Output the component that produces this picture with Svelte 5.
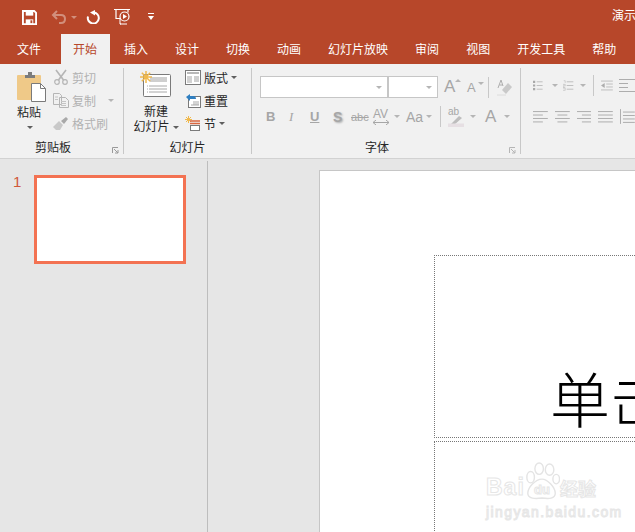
<script>
  const tabs = ["文件", "开始", "插入", "设计", "切换", "动画", "幻灯片放映", "审阅", "视图", "开发工具", "帮助"];
  const active = "开始";
</script>

<div class="app">
  <header class="titlebar">
    <svg class="qat save" width="15" height="15" viewBox="0 0 16 16">
      <path d="M1 1h12l2 2v12H1z" fill="none" stroke="#fff" stroke-width="2" />
      <rect x="4" y="2" width="8" height="4" fill="#fff" />
      <rect x="4" y="10" width="8" height="5" fill="#fff" />
      <rect x="9" y="11" width="2" height="3" fill="#b7472a" />
    </svg>
    <svg class="qat undo" width="16" height="14" viewBox="0 0 16 14">
      <path d="M6 1 2 5l4 4M2 5h8c3 0 4 2 4 4s-1 4-4 4H8" fill="none" stroke="#d28f7c" stroke-width="2" />
    </svg>
    <i class="caret qat-caret faded"></i>
    <svg class="qat redo" width="14" height="14" viewBox="0 0 14 14">
      <path d="M7.500 2.500A5.500 5.500 0 1 1 2 6.500" fill="none" stroke="#fff" stroke-width="2" />
      <path d="M4 2.500 9 0v5.500z" fill="#fff" />
    </svg>
    <svg class="qat show" width="17" height="18" viewBox="0 0 17 18">
      <path d="M0 1.500h16M2 1.500v9h4M14 1.500v3" fill="none" stroke="#fff" stroke-width="1.200" />
      <circle cx="10.500" cy="8.500" r="4.500" fill="none" stroke="#fff" stroke-width="1.200" />
      <path d="M9 6v5l4-2.500z" fill="#fff" />
      <path d="M6 10v6h1M6 16h7" fill="none" stroke="#fff" />
    </svg>
    <svg class="qat more" width="6" height="8" viewBox="0 0 6 8">
      <path d="M0 0h6v1H0zM0 3h6L3 7z" fill="#fff" />
    </svg>
    <span class="doc-title">演示文稿1 - PowerPoint</span>
  </header>

  <nav class="tabs">
    {#each tabs as t}
      <span class="tab" class:active={t === active}>{t}</span>
    {/each}
  </nav>

  <div class="ribbon">
    <section class="group g-clip">
      <div class="group-body">
        <div class="paste">
          <svg width="30" height="31" viewBox="0 0 30 31">
            <rect x="0" y="3" width="24" height="25" rx="1" fill="#efc988" />
            <path d="M8 6V3h3V0h4v3h3v3z" fill="#7c7c7c" />
            <path d="M14.500 11.500h9l5 5v13h-14z" fill="#fff" stroke="#7a7a7a" />
            <path d="M23.500 11.500v5h5" fill="none" stroke="#7a7a7a" />
          </svg>
          <span class="paste-label">粘贴</span>
          <i class="caret"></i>
        </div>
        <div class="small-col">
          <div class="small-row off">
            <svg width="16" height="16" viewBox="0 0 16 16">
              <path d="M3 1l7.500 10M13 1 5.500 11" stroke="#b5b5b5" stroke-width="1.600" fill="none" />
              <circle cx="4" cy="13" r="2.300" fill="none" stroke="#b5b5b5" stroke-width="1.200" />
              <circle cx="12" cy="13" r="2.300" fill="none" stroke="#b5b5b5" stroke-width="1.200" />
            </svg>
            <span>剪切</span>
          </div>
          <div class="small-row off">
            <svg width="16" height="16" viewBox="0 0 16 16">
              <path d="M.5 1.500h6l2 2v9h-8z M6.500 5.500h6l3 3v7h-9z" fill="#f1f1f1" stroke="#b5b5b5" />
              <path d="M2 5h3M2 7.500h3M8 9.500h5M8 11.500h5M8 13.500h5" stroke="#c4c4c4" />
            </svg>
            <span>复制</span>
            <i class="caret copy-caret faded-grey"></i>
          </div>
          <div class="small-row off">
            <svg width="16" height="16" viewBox="0 0 16 16">
              <path d="M0 12l6-6 4 4-3 5H3z" fill="#c9c9c9" />
              <path d="M8 6l5-4 2 2-4 5z" fill="#a9a9a9" />
            </svg>
            <span>格式刷</span>
          </div>
        </div>
      </div>
      <div class="group-label">剪贴板</div>
      <svg class="launcher" width="7" height="7" viewBox="0 0 7 7">
        <path d="M.5 6V.5H6M2 2l4 4M6 3v3H3" fill="none" stroke="#9a9a9a" />
      </svg>
    </section>

    <section class="group g-slides">
      <div class="group-body">
        <div class="new-slide">
          <svg width="31" height="27" viewBox="0 0 31 27">
            <rect x="3.500" y="3.500" width="27" height="22" rx="1" fill="#fff" stroke="#7a7a7a" />
            <rect x="10" y="6" width="17" height="5" fill="#cfcfcf" />
            <path d="M7 15h20M7 18h20M7 21h20" stroke="#a8a8a8" stroke-dasharray="1 1 18" />
            <path d="M6 0v12M0 6h12M1.800 1.800l8.400 8.400M10.200 1.800l-8.400 8.400" stroke="#f0b94d" stroke-width="1.500" />
          </svg>
          <span class="new-label">新建</span>
          <span class="new-label">幻灯片<i class="caret inline"></i></span>
        </div>
        <div class="small-col">
          <div class="small-row">
            <svg width="16" height="15" viewBox="0 0 16 15">
              <rect x=".5" y=".5" width="15" height="14" fill="#fff" stroke="#7a7a7a" />
              <rect x="2" y="2" width="12" height="2" fill="#b8b8b8" />
              <rect x="2" y="6" width="5" height="7" fill="#d2d2d2" />
              <path d="M9 7h5M9 9h5M9 11h5" stroke="#a0a0a0" />
            </svg>
            <span>版式</span>
            <i class="caret"></i>
          </div>
          <div class="small-row">
            <svg width="16" height="15" viewBox="0 0 16 15">
              <rect x="3.500" y="3.500" width="12" height="11" fill="#fff" stroke="#7a7a7a" />
              <path d="M8 9h6M8 11h6M6 12h8" stroke="#a8a8a8" />
              <path d="M1 4l4-3v2h3c2 0 3 1 3 3H5v2z" fill="#2f7fc1" />
            </svg>
            <span>重置</span>
          </div>
          <div class="small-row">
            <svg width="16" height="15" viewBox="0 0 16 15">
              <path d="M3.500 0v7M0 3.500h7M1 1l5 5M6 1 1 6" stroke="#f0b94d" />
              <path d="M5 5h10M5 7.500h10" stroke="#d9663f" stroke-width="1.300" />
              <rect x="5.500" y="9.500" width="9" height="5" fill="#fff" stroke="#7a7a7a" />
            </svg>
            <span>节</span>
            <i class="caret"></i>
          </div>
        </div>
      </div>
      <div class="group-label">幻灯片</div>
    </section>

    <section class="group g-font">
      <div class="group-body col">
        <div class="font-row">
          <div class="combo name"><i class="caret faded-grey"></i></div>
          <div class="combo size"><i class="caret faded-grey"></i></div>
          <span class="glyph big-a">A<i class="up"></i></span>
          <span class="glyph small-a">A<i class="down"></i></span>
          <span class="vsep"></span>
          <svg class="eraser" width="15" height="17" viewBox="0 0 15 17">
            <path d="M5 11l6-7 4 4-6 7z" fill="#c9c9c9" />
            <path d="M0 16h9" stroke="#dcdcdc" />
            <path d="M1 9l3-8 2 6M2.500 6h3" fill="none" stroke="#adadad" />
          </svg>
        </div>
        <div class="fmt-row">
          <b class="fmt f-b">B</b>
          <i class="fmt f-i">I</i>
          <u class="fmt f-u">U</u>
          <span class="fmt f-s">S</span>
          <s class="fmt f-abc">abc</s>
          <span class="fmt f-av">AV<svg width="16" height="5" viewBox="0 0 16 5"><path d="M0 2.500h16M3 0 0 2.500 3 5M13 0l3 2.500L13 5" fill="none" stroke="#a6a6a6" /></svg></span>
          <i class="caret faded-grey"></i>
          <span class="fmt f-aa">Aa</span>
          <i class="caret faded-grey"></i>
          <span class="vsep tall"></span>
          <span class="fmt f-hl">ab<svg width="16" height="12" viewBox="0 0 16 12"><path d="M3 9l8-8 3 2-8 7z" fill="#bdbdbd" /><rect y="8.500" width="16" height="3.500" fill="#e6dfe3" /></svg></span>
          <i class="caret faded-grey"></i>
          <span class="fmt f-color">A</span>
          <i class="caret faded-grey"></i>
        </div>
      </div>
      <div class="group-label">字体</div>
      <svg class="launcher" width="7" height="7" viewBox="0 0 7 7">
        <path d="M.5 6V.5H6M2 2l4 4M6 3v3H3" fill="none" stroke="#b5b5b5" />
      </svg>
    </section>

    <section class="group g-para">
      <div class="group-body col">
        <div class="para-row">
          <svg width="15" height="15" viewBox="0 0 15 15">
            <path d="M5 2.500h8M5 7.500h8M5 12.500h8" stroke="#adadad" />
            <path d="M0 2.500h3M0 7.500h3M0 12.500h3" stroke="#a8a8a8" stroke-width="3" />
          </svg>
          <i class="caret faded-grey c-bullet"></i>
          <svg class="num-list" width="15" height="15" viewBox="0 0 15 15">
            <path d="M5 2.500h9M5 7.500h9M5 12.500h9" stroke="#adadad" />
            <path d="M1 1h2v3M0 6h3v2H0v2h3M0 11h3v3H0" fill="none" stroke="#b8b8b8" stroke-width=".8" />
          </svg>
          <i class="caret faded-grey c-num"></i>
          <span class="vsep"></span>
          <svg width="16" height="13" viewBox="0 0 16 13">
            <path d="M0 .5h16M7 4.500h9M7 8.500h9M0 12.500h16" stroke="#adadad" />
            <path d="M5 3v7L0 6.500z" fill="#adadad" />
          </svg>
          <svg class="indent-more" width="16" height="13" viewBox="0 0 16 13">
            <path d="M0 .5h16M0 4.500h9M0 8.500h9M0 12.500h16" stroke="#adadad" />
          </svg>
        </div>
        <div class="para-row align">
          <svg width="15" height="12" viewBox="0 0 15 12"><path d="M0 .5h15M0 4h10M0 7.500h15M0 11h10" stroke="#adadad" /></svg>
          <svg width="15" height="12" viewBox="0 0 15 12"><path d="M0 .5h15M2.500 4h10M0 7.500h15M2.500 11h10" stroke="#adadad" /></svg>
          <svg width="15" height="12" viewBox="0 0 15 12"><path d="M0 .5h15M5 4h10M0 7.500h15M5 11h10" stroke="#adadad" /></svg>
          <svg width="15" height="12" viewBox="0 0 15 12"><path d="M0 .5h15M0 4h15M0 7.500h15M0 11h15" stroke="#adadad" /></svg>
          <svg width="15" height="15" viewBox="0 0 15 15"><path d="M.5 0v15M3 3h12M3 6.500h12M3 10h12M3 13.500h12" stroke="#adadad" /></svg>
        </div>
      </div>
    </section>
  </div>

  <main class="workspace">
    <aside class="thumbs">
      <span class="thumb-num">1</span>
      <div class="thumb"></div>
    </aside>
    <div class="editor">
      <div class="slide">
        <div class="placeholder title-box"><span class="title-text">单击此处添加标题</span></div>
        <div class="placeholder sub-box"></div>
      </div>
    </div>
  </main>

  <div class="watermark">
    <div class="wm-top">
      <span class="wm-bai">Bai</span>
      <svg class="wm-paw" width="36" height="38" viewBox="0 0 38 40">
        <g fill="#fff" stroke="#e4e4e4" stroke-width="1.500">
          <ellipse cx="7" cy="16" rx="4" ry="6" />
          <ellipse cx="16" cy="7" rx="4.500" ry="6" />
          <ellipse cx="27" cy="8" rx="4.500" ry="6" />
          <ellipse cx="34" cy="18" rx="3.500" ry="5" />
          <path d="M19 18c6 0 14 9 14 15 0 6-7 6-14 5-7 1-15 1-15-5 0-6 8-15 15-15z" />
        </g>
      </svg>
      <span class="wm-du">du</span>
      <span class="wm-jy">经验</span>
    </div>
    <div class="wm-url">jingyan.baidu.com</div>
  </div>
</div>

<style>
  :global(body) {
    margin: 0;
    overflow: hidden;
  }

  .app {
    position: relative;
    width: 635px;
    height: 532px;
    overflow: hidden;
    display: flex;
    flex-direction: column;
    background: #e6e6e6;
    font-family: "Noto Sans CJK SC", "Liberation Sans", sans-serif;
    font-size: 12px;
    color: #262626;
  }

  .titlebar {
    height: 34px;
    flex: none;
    background: #b7472a;
    display: flex;
    align-items: center;
    position: relative;
  }
  .qat { flex: none; }
  .save { margin-left: 22px; }
  .undo { margin-left: 14px; }
  .qat-caret { margin-left: 4px; }
  .redo { margin-left: 9px; }
  .show { margin-left: 14px; }
  .more { margin-left: 17px; }
  .doc-title {
    margin-left: 458px;
    color: #fff;
    white-space: nowrap;
    line-height: 30px;
    align-self: flex-start;
  }

  .tabs {
    height: 30px;
    flex: none;
    background: #b7472a;
    display: flex;
    padding-left: 17px;
    white-space: nowrap;
  }
  .tab {
    color: #fff;
    line-height: 30px;
    margin-right: 27px;
  }
  .tab:first-child { margin-right: 32px; }
  .tab.active {
    background: #f1f1f1;
    color: #b7472a;
    padding: 0 13px 0 12px;
    margin-left: -12px;
    margin-right: 14px;
  }

  .ribbon {
    height: 95px;
    flex: none;
    box-sizing: border-box;
    background: #f1f1f1;
    border-bottom: 1px solid #d2d2d2;
    display: flex;
    padding-top: 4px;
  }
  .group {
    position: relative;
    height: 86px;
    flex: none;
    box-sizing: border-box;
    border-right: 1px solid #c8c8c8;
    display: flex;
    flex-direction: column;
  }
  .group-body {
    height: 72px;
    flex: none;
    display: flex;
  }
  .group-body.col { flex-direction: column; }
  .group-label {
    line-height: 14px;
    text-align: center;
    white-space: nowrap;
  }
  .launcher {
    position: absolute;
    right: 4px;
    bottom: 0;
  }

  .g-clip { width: 124px; }
  .g-clip .group-label { padding-right: 17px; }
  .g-slides { width: 128px; }
  .g-font { width: 269px; }
  .g-font .group-label { padding-right: 18px; }
  .g-para { width: 114px; border-right: 0; }

  .caret {
    display: inline-block;
    flex: none;
    width: 0;
    height: 0;
    border: 3px solid transparent;
    border-top: 3px solid #5f5f5f;
    border-bottom: 0;
    vertical-align: middle;
  }
  .caret.inline { margin-left: 3px; }
  .caret.faded { border-top-color: #d28f7c; }
  .caret.faded-grey { border-top-color: #b5b5b5; }

  .paste {
    width: 53px;
    box-sizing: border-box;
    padding: 4px 0 0 17px;
    display: flex;
    flex-direction: column;
  }
  .paste-label {
    line-height: 16px;
    margin-top: 1px;
    white-space: nowrap;
  }
  .paste .caret { margin: 6px 0 0 10px; }

  .small-col {
    display: flex;
    flex-direction: column;
    padding-top: 1px;
    gap: 7px;
  }
  .small-row {
    height: 16px;
    display: flex;
    align-items: center;
    gap: 3px;
    white-space: nowrap;
  }
  .small-row.off { color: #b1b1b1; }
  .copy-caret { margin-left: 9px; }

  .new-slide {
    width: 61px;
    box-sizing: border-box;
    padding-top: 3px;
    display: flex;
    flex-direction: column;
    align-items: center;
  }
  .new-slide svg { margin-bottom: 5px; margin-left: 2px; }
  .new-label {
    line-height: 15px;
    white-space: nowrap;
    margin-left: 3px;
  }

  .font-row {
    display: flex;
    align-items: center;
    padding: 8px 0 0 8px;
    height: 22px;
  }
  .combo {
    height: 22px;
    box-sizing: border-box;
    background: #fff;
    border: 1px solid #c6c6c6;
    display: flex;
    align-items: center;
    justify-content: flex-end;
    padding-right: 5px;
  }
  .combo.name { width: 128px; }
  .combo.size { width: 50px; }
  .glyph {
    position: relative;
    color: #a6a6a6;
    font-family: "Liberation Sans", sans-serif;
  }
  .big-a { font-size: 17px; margin-left: 6px; width: 21px; }
  .small-a { font-size: 13px; margin-left: 2px; width: 18px; }
  .up, .down {
    position: absolute;
    left: 11px;
    top: 2px;
    border: 3px solid transparent;
    border-top: 0;
    border-bottom: 3px solid #b5b5b5;
  }
  .down {
    border-bottom: 0;
    border-top: 3px solid #b5b5b5;
  }
  .vsep {
    width: 1px;
    height: 21px;
    background: #c8c8c8;
    margin: 0 9px 0 3px;
    flex: none;
  }
  .font-row .vsep { margin-right: 8px; }

  .fmt-row {
    display: flex;
    align-items: center;
    height: 21px;
    margin-top: 8px;
    padding-left: 14px;
    color: #a6a6a6;
    font-family: "Liberation Sans", sans-serif;
  }
  .fmt { flex: none; }
  .f-b { font-size: 13px; width: 23px; }
  .f-i { font-size: 13px; width: 21px; font-family: "Liberation Serif", serif; }
  .f-u { font-size: 13px; width: 23px; font-weight: bold; }
  .f-s { font-size: 14px; width: 18px; font-weight: bold; text-shadow: 1px 1px 2px #aaa; }
  .f-abc { font-size: 11px; width: 22px; }
  .f-av {
    width: 19px;
    font-size: 12px;
    display: flex;
    flex-direction: column;
    line-height: 11px;
  }
  .fmt-row .caret { margin-left: 2px; }
  .f-aa { font-size: 14px; width: 16px; margin-left: 6px; }
  .f-aa + .caret { margin-left: 4px; }
  .fmt-row .vsep { margin: 0 7px 0 8px; }
  .f-hl {
    width: 16px;
    position: relative;
    font-size: 10px;
    line-height: 10px;
    height: 20px;
  }
  .f-hl svg {
    position: absolute;
    left: 0;
    top: 8px;
  }
  .f-hl + .caret { margin-left: 6px; }
  .f-color { font-size: 17px; margin-left: 9px; width: 15px; }
  .f-color + .caret { margin-left: 4px; }

  .para-row {
    display: flex;
    align-items: center;
    height: 22px;
    padding: 6px 0 0 12px;
  }
  .c-bullet { margin-left: 8px; }
  .num-list { margin-left: 5px; }
  .c-num { margin-left: 6px; }
  .para-row .vsep { margin: 0 7px 0 7px; }
  .indent-more { margin-left: 6px; flex: none; }
  .para-row.align {
    height: 21px;
    margin-top: 10px;
    padding-top: 0;
    gap: 7px;
  }

  .workspace {
    flex: 1;
    display: flex;
    min-height: 0;
  }
  .thumbs {
    width: 208px;
    flex: none;
    box-sizing: border-box;
    border-right: 1px solid #bdbdbd;
    display: flex;
    align-items: flex-start;
    padding: 14px 0 0 13px;
    margin-top: 2px;
  }
  .thumb-num {
    width: 21px;
    flex: none;
    font-family: "Liberation Sans", sans-serif;
    font-size: 15px;
    line-height: 14px;
    color: #d0583a;
  }
  .thumb {
    width: 152px;
    height: 89px;
    box-sizing: border-box;
    background: #fff;
    border: 3px solid #f37252;
  }
  .editor {
    flex: 1;
    min-width: 0;
    padding: 11px 0 0 111px;
  }
  .slide {
    height: 100%;
    box-sizing: border-box;
    background: #fff;
    border: solid #c6c6c6;
    border-width: 1px 0 0 1px;
    padding: 84px 0 0 114px;
    overflow: hidden;
  }
  .placeholder {
    box-sizing: border-box;
    border: 1px dotted #777;
    border-right: 0;
  }
  .title-box {
    height: 183px;
    display: flex;
    align-items: flex-end;
    padding-left: 115px;
    white-space: nowrap;
    overflow: hidden;
  }
  .title-text {
    font-size: 60px;
    font-weight: 300;
    line-height: 80px;
    color: #000;
  }
  .sub-box {
    height: 120px;
    margin-top: 3px;
  }

  .watermark {
    position: absolute;
    left: 486px;
    top: 462px;
    width: 114px;
    color: #fff;
    font-family: "Liberation Sans", sans-serif;
  }
  .wm-top {
    position: relative;
    display: flex;
    align-items: flex-end;
    height: 38px;
    white-space: nowrap;
  }
  .wm-bai, .wm-jy, .wm-du, .wm-url {
    -webkit-text-stroke: 1px #e6e6e6;
  }
  .wm-bai {
    font-size: 23px;
    line-height: 25px;
    font-weight: bold;
    width: 38px;
    letter-spacing: 1px;
  }
  .wm-paw { flex: none; }
  .wm-du {
    position: absolute;
    left: 48px;
    top: 21px;
    font-size: 13px;
    line-height: 14px;
    font-weight: bold;
  }
  .wm-jy {
    font-family: "Noto Sans CJK SC", sans-serif;
    font-size: 18px;
    line-height: 24px;
    font-weight: bold;
  }
  .wm-url {
    font-size: 14px;
    line-height: 14px;
    margin-top: 5px;
    white-space: nowrap;
    letter-spacing: 1.4px;
  }
</style>
